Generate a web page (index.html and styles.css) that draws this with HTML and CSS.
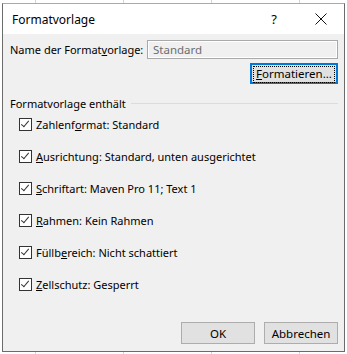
FILE: index.html
```html
<!DOCTYPE html>
<html lang="de">
<head>
  <meta charset="UTF-8">
  <title>Formatvorlage</title>
  <link rel="stylesheet" href="styles.css">
</head>
<body>
  <div class="dialog">
    <div class="titlebar">
      <span class="title">Formatvorlage</span>
      <span class="help">?</span>
      <svg class="close" width="12" height="12" viewBox="0 0 12 12">
        <path d="M0.5 0.5 L11.5 11.5 M11.5 0.5 L0.5 11.5" stroke="#111" stroke-width="1"/>
      </svg>
    </div>
    <div class="content">
      <div class="name-row">
        <label>Name der Format<u>v</u>orlage:</label>
        <div class="name-input">Standard</div>
      </div>
      <div class="format-row">
        <button class="btn focused"><span><u>F</u>ormatieren...</span></button>
      </div>

      <div class="group-head">
        <span>Formatvorlage enthält</span>
        <div class="rule"></div>
      </div>

      <div class="checks">
        <div class="check"><span class="box"></span>Zahlenf<u>o</u>rmat: Standard</div>
        <div class="check"><span class="box"></span><u>A</u>usrichtung: Standard, unten ausgerichtet</div>
        <div class="check"><span class="box"></span><u>S</u>chriftart: Maven Pro 11; Text 1</div>
        <div class="check"><span class="box"></span><u>R</u>ahmen: Kein Rahmen</div>
        <div class="check"><span class="box"></span>Füllb<u>e</u>reich: Nicht schattiert</div>
        <div class="check"><span class="box"></span><u>Z</u>ellschutz: Gesperrt</div>
      </div>

      <div class="footer">
        <button class="btn">OK</button>
        <button class="btn">Abbrechen</button>
      </div>
    </div>
  </div>
</body>
</html>
```

FILE: styles.css
```css
body {
  margin: 0;
  width: 347px;
  height: 354px;
  background-color: #fff;
  background-image: linear-gradient(90deg, #d4d4d4 1px, transparent 1px);
  background-size: 88px 100%;
  background-position: 35px 0;
  font-family: "Noto Sans", sans-serif;
  font-size: 11px;
  color: #000;
  overflow: hidden;
}
.dialog {
  margin: 3px 0 0 2px;
  width: 341px;
  height: 347px;
  border: 1px solid #6b6b6b;
  border-top-color: #aaa;
  background: #f0f0f0;
  display: flex;
  flex-direction: column;
}
.titlebar {
  height: 30px;
  background: #fff;
  display: flex;
  align-items: center;
  padding: 0 0 0 9px;
}
.title {
  font-size: 12px;
  flex: 1;
}
.help {
  font-size: 13px;
  margin-right: 38px;
}
.close {
  margin-right: 17px;
}
.content {
  flex: 1;
  display: flex;
  flex-direction: column;
  padding: 6px 6px 7px 7px;
}
.name-row {
  display: flex;
  align-items: center;
  justify-content: space-between;
}
.name-row label {
  white-space: nowrap;
}
.name-input {
  width: 184px;
  height: 17px;
  border: 1px solid #a9a9a9;
  box-shadow: inset 0 0 0 1px #fff;
  padding-left: 5px;
  line-height: 17px;
  color: #6d6d6d;
  font-size: 11.5px;
}
.format-row {
  display: flex;
  justify-content: flex-end;
  margin-top: 4px;
}
.btn {
  font-family: "Noto Sans", sans-serif;
  font-size: 11.5px;
  color: #000;
  background: #e1e1e1;
  border: 1px solid #adadad;
  width: 74px;
  height: 22px;
  padding: 0;
}
.btn.focused {
  width: 88px;
  height: 21px;
  border: 2px solid #0078d7;
  padding: 1px;
}
.btn.focused span {
  display: block;
  height: 100%;
  border: 1px dotted #000;
  line-height: 13px;
}
.group-head {
  display: flex;
  align-items: center;
  margin-top: 12px;
}
.rule {
  flex: 1;
  height: 1px;
  background: #dcdcdc;
  margin-left: 5px;
}
.checks {
  display: flex;
  flex-direction: column;
  gap: 16px;
  margin: 5px 0 0 9px;
}
.check {
  display: flex;
  align-items: center;
  height: 16px;
  white-space: nowrap;
}
.box {
  width: 11px;
  height: 11px;
  border: 1px solid #333;
  background: #fff;
  margin-right: 4px;
  position: relative;
}
.box::after {
  content: "";
  position: absolute;
  left: 3px;
  top: 0px;
  width: 3px;
  height: 7px;
  border-right: 1px solid #333;
  border-bottom: 1px solid #333;
  transform: rotate(40deg);
}
.footer {
  margin-top: auto;
  display: flex;
  justify-content: flex-end;
  gap: 9px;
}
```
